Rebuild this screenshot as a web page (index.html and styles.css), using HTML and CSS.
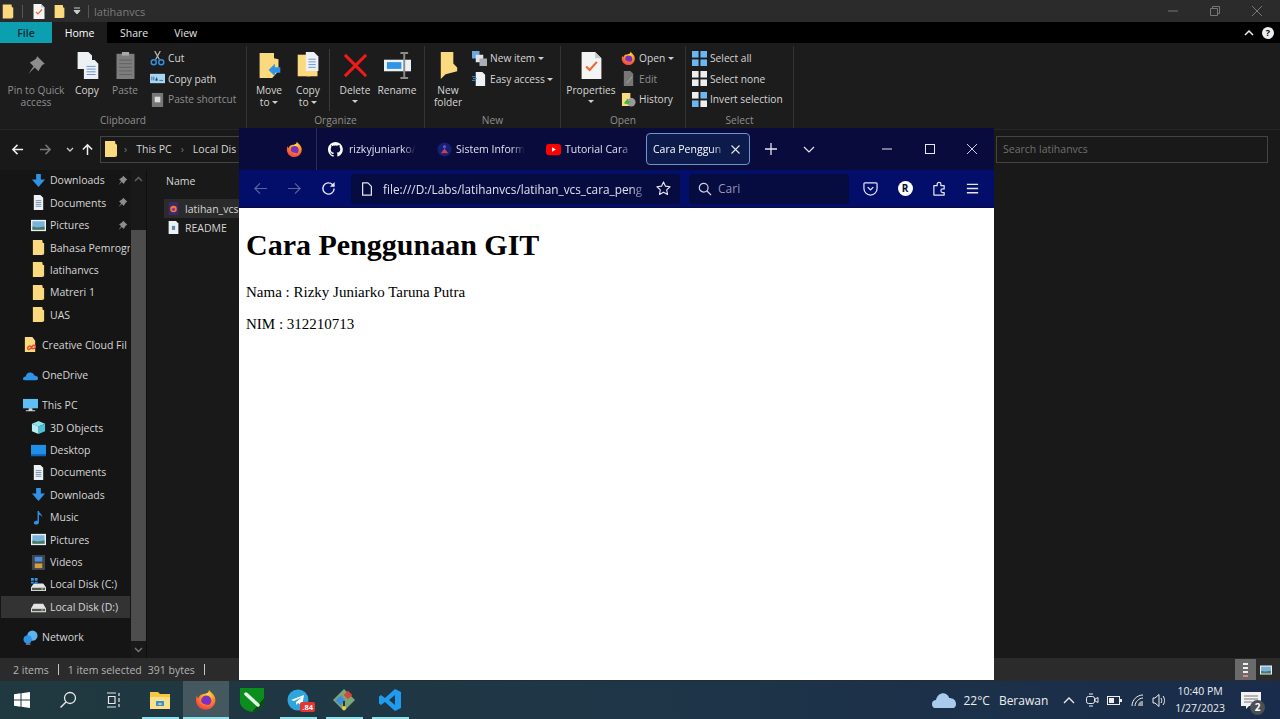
FILE: index.html
```html
<!DOCTYPE html>
<html lang="en">
<head>
  <meta charset="UTF-8" />
  <title>latihanvcs</title>
  <link rel="stylesheet" href="styles.css">
</head>
<body>
  <svg class="defs" width="0" height="0">
    <defs>
      <radialGradient id="fxOuter" cx="0.6" cy="0.25" r="0.9">
        <stop offset="0" stop-color="#ffe23f"/>
        <stop offset="0.45" stop-color="#ff8a1f"/>
        <stop offset="1" stop-color="#f0274f"/>
      </radialGradient>
      <symbol id="firefox" viewBox="0 0 16 16">
        <path fill="url(#fxOuter)" d="M10 .5c1 1.500 3.500 2.800 4.500 5.500 1 3-.3 6.300-3 8-3 1.800-7 1.200-9.200-1.400C.5 10.400.3 7 1.500 4.800c0 1 .4 1.500 1 1.900C3 5 4 4 5.500 3.800 7.800 3.400 10.500 3 10 .5z"/>
        <circle cx="8.200" cy="8.400" r="3.700" fill="#7b2fc4"/>
        <path fill="#ff8a1f" d="M4 9c1 3 4.500 4.200 7.500 2.300-2 .6-5 .3-7.500-2.300z"/>
      </symbol>
      <symbol id="folder" viewBox="0 0 16 16">
        <path fill="#fbd97f" d="M2 0h10l.5 3 1.500.5V15l-2 1H2z"/>
        <path fill="#e3b95a" d="M12 16l2-1-2-1z"/>
      </symbol>
      <symbol id="arrowDown" viewBox="0 0 16 16">
        <path fill="#2f93e6" d="M5.500 1h5v6H15l-7 8-7-8h4.500z"/>
      </symbol>
      <symbol id="doc" viewBox="0 0 16 16">
        <path fill="#eef1f4" d="M3 0h7l3 3v13H3z"/>
        <path stroke="#6f8faf" d="M5 6h6M5 8h6M5 10h6M5 12h6"/>
      </symbol>
      <symbol id="picture" viewBox="0 0 16 16">
        <rect y="2" width="16" height="12" fill="#eef1f4"/>
        <rect x="1.500" y="3.500" width="13" height="9" fill="#78b3dd"/>
        <path fill="#4d7a5e" d="M1.500 12.500V9l5 1 8-1v3.500z"/>
      </symbol>
      <symbol id="pin" viewBox="0 0 16 16">
        <path fill="#8c8c8c" d="M9 1l6 6-2 1-2 3-1 2-3-3-5 5 4-6-3-3 2-1 3-2z"/>
      </symbol>
      <symbol id="drive" viewBox="0 0 16 16">
        <path fill="#e4e4e4" d="M3 5h10l3 5v4H0v-4z"/>
        <rect x="1" y="10.500" width="14" height="2.500" fill="#555"/>
        <rect x="11" y="11" width="2" height="1.500" fill="#67d067"/>
      </symbol>
      <symbol id="bigDoc" viewBox="0 0 24 30">
        <path fill="#f4f4f4" d="M1 0h15l7 7v23H1z"/>
        <path fill="#c9c9c9" d="M16 0l7 7h-7z"/>
        <path fill="none" stroke="#ec6a35" stroke-width="2.400" d="M6 16l4 4 8-9"/>
      </symbol>
      <symbol id="sel" viewBox="0 0 16 16">
        <rect width="7" height="7"/><rect x="9" width="7" height="7"/>
        <rect y="9" width="7" height="7"/><rect x="9" y="9" width="7" height="7"/>
      </symbol>
    </defs>
  </svg>

  <div class="explorer">
    <div class="title-bar">
      <svg class="ic-title"><use href="#folder"/></svg>
      <span class="title-sep"></span>
      <svg class="ic-title qa-doc"><use href="#bigDoc"/></svg>
      <svg class="ic-title qa-folder"><use href="#folder"/></svg>
      <svg class="qa-drop" width="8" height="8" viewBox="0 0 8 8"><path d="M1 1h6M1 3.500h6l-3 3.500z" stroke="#ccc" fill="#ccc"/></svg>
      <span class="title-sep"></span>
      <span class="title-text">latihanvcs</span>
      <div class="win-controls">
        <svg width="10" height="10" viewBox="0 0 10 10"><path d="M0 5h10" stroke="#777"/></svg>
        <svg width="10" height="10" viewBox="0 0 10 10"><path d="M.5 2.500h7v7h-7zM2.500 2.500v-2h7v7h-2" stroke="#777" fill="none"/></svg>
        <svg width="10" height="10" viewBox="0 0 10 10"><path d="M0 0l10 10M10 0L0 10" stroke="#777"/></svg>
      </div>
    </div>

    <div class="tabs">
      <div class="tab tab-file">File</div>
      <div class="tab tab-home">Home</div>
      <div class="tab">Share</div>
      <div class="tab">View</div>
      <div class="tabs-right">
        <svg width="10" height="7" viewBox="0 0 10 7"><path d="M1 6l4-4 4 4" fill="none" stroke="#eee" stroke-width="1.500"/></svg>
        <span class="help">?</span>
      </div>
    </div>

    <div class="ribbon">
      <div class="group group-clipboard">
        <div class="group-body">
          <div class="big dim">
            <svg class="big-ic-pin" viewBox="0 0 16 16"><use href="#pin"/></svg>
            <span>Pin to Quick access</span>
          </div>
          <div class="big">
            <svg class="big-ic" viewBox="0 0 24 30">
              <path fill="#eef1f4" d="M1 0h12l4 4v15H1z"/>
              <path fill="#eef1f4" d="M8 9h12l4 4v17H8z"/>
              <path stroke="#5c8fd6" d="M11 16h10M11 19h10M11 22h10M11 25h10"/>
            </svg>
            <span>Copy</span>
          </div>
          <div class="big dim">
            <svg class="big-ic" viewBox="0 0 24 30">
              <rect x="2" y="2" width="20" height="28" fill="#7d7d7d"/>
              <rect x="8" y="0" width="8" height="4" fill="#a8a8a8"/>
              <path stroke="#5e5e5e" d="M5 9h14M5 13h14M5 17h14M5 21h14M5 25h14"/>
            </svg>
            <span>Paste</span>
          </div>
          <div class="small-col">
            <div class="small">
              <svg class="ic" viewBox="0 0 16 16"><path d="M5 0l5 9M11 0L6 9" stroke="#bbb" stroke-width="1.300"/><circle cx="4" cy="12" r="2.700" fill="none" stroke="#2f93e6" stroke-width="1.500"/><circle cx="12" cy="12" r="2.700" fill="none" stroke="#2f93e6" stroke-width="1.500"/></svg>
              <span>Cut</span>
            </div>
            <div class="small">
              <svg class="ic" viewBox="0 0 16 16"><rect y="3" width="16" height="10" fill="#a9d4f2"/><path d="M2 6v4M4 6v4M6 10l1-3 1 3M10 10h4" stroke="#3a6f9a"/></svg>
              <span>Copy path</span>
            </div>
            <div class="small dim">
              <svg class="ic" viewBox="0 0 16 16"><rect x="2" y="1" width="12" height="15" fill="#777"/><rect x="5" y="5" width="6" height="6" fill="#ddd"/></svg>
              <span>Paste shortcut</span>
            </div>
          </div>
        </div>
        <div class="group-label">Clipboard</div>
      </div>

      <div class="group group-organize">
        <div class="group-body">
          <div class="big">
            <svg class="big-ic" viewBox="0 0 24 30">
              <path fill="#fbd97f" d="M1 1h16v6l5 1v13l-7 8H1z"/>
              <path fill="#2f93e6" d="M11 20l7-7v4h6v6h-6v4z"/>
            </svg>
            <span>Move<br>to <i class="caret"></i></span>
          </div>
          <div class="big">
            <svg class="big-ic" viewBox="0 0 24 30">
              <path fill="#fbd97f" d="M0 3h14v24H0z"/>
              <path fill="#fbd97f" d="M10 8h12v19H10z"/>
              <path fill="#eef1f4" d="M9 0h9l5 5v16H9z"/>
              <path stroke="#5c8fd6" d="M12 8h8M12 11h8M12 14h8M12 17h8"/>
            </svg>
            <span>Copy<br>to <i class="caret"></i></span>
          </div>
          <span class="group-sep"></span>
          <div class="big">
            <svg class="big-ic" viewBox="-2 -2 28 28"><path d="M1 1l22 22M23 1L1 23" stroke="#f01a1a" stroke-width="3"/></svg>
            <span>Delete <i class="caret caret-block"></i></span>
          </div>
          <div class="big">
            <svg class="big-ic" viewBox="0 0 28 26">
              <rect x="0" y="7" width="28" height="12" fill="#eef1f4"/>
              <rect x="3" y="9.500" width="15" height="7" fill="#2f93e6"/>
              <path d="M17 0h8M21 0v26M17 26h8" stroke="#8c8c8c" stroke-width="2"/>
            </svg>
            <span>Rename</span>
          </div>
        </div>
        <div class="group-label">Organize</div>
      </div>

      <div class="group group-new">
        <div class="group-body">
          <div class="big">
            <svg class="big-ic" viewBox="0 0 20 28"><path fill="#fbd97f" d="M2 0h13v12l4 4v4l-12 3-5 5z"/></svg>
            <span>New<br>folder</span>
          </div>
          <div class="small-col">
            <div class="small">
              <svg class="ic" viewBox="0 0 16 16"><rect width="8" height="8" fill="#6da7dd"/><rect x="4" y="4" width="8" height="8" fill="#dfe3e8"/><rect x="8" y="8" width="8" height="8" fill="#a7adb5"/></svg>
              <span>New item <i class="caret"></i></span>
            </div>
            <div class="small">
              <svg class="ic" viewBox="0 0 16 16"><path fill="#eef1f4" d="M4 1h7l3 3v12H4z"/><path stroke="#2f93e6" d="M0 6h4M1 8h4M0 10h4"/></svg>
              <span>Easy access <i class="caret"></i></span>
            </div>
          </div>
        </div>
        <div class="group-label">New</div>
      </div>

      <div class="group group-open">
        <div class="group-body">
          <div class="big">
            <svg class="big-ic" viewBox="0 0 24 30"><use href="#bigDoc"/></svg>
            <span>Properties <i class="caret caret-block"></i></span>
          </div>
          <div class="small-col">
            <div class="small">
              <svg class="ic"><use href="#firefox"/></svg>
              <span>Open <i class="caret"></i></span>
            </div>
            <div class="small dim">
              <svg class="ic" viewBox="0 0 16 16"><path fill="#777" d="M3 0h7l3 3v13H3z"/><path stroke="#aaa" d="M6 13l6-7"/></svg>
              <span>Edit</span>
            </div>
            <div class="small">
              <svg class="ic" viewBox="0 0 16 16"><path fill="#fbd97f" d="M1 1h9v5l3 1v8H1z"/><circle cx="11" cy="11" r="4.500" fill="#9a9a9a"/><path fill="#39b54a" d="M3 12l4-5 1 3 3 0-4 3z"/></svg>
              <span>History</span>
            </div>
          </div>
        </div>
        <div class="group-label">Open</div>
      </div>

      <div class="group group-select">
        <div class="group-body">
          <div class="small-col">
            <div class="small">
              <svg class="ic sel-all"><use href="#sel"/></svg>
              <span>Select all</span>
            </div>
            <div class="small">
              <svg class="ic sel-none"><use href="#sel"/></svg>
              <span>Select none</span>
            </div>
            <div class="small">
              <svg class="ic" viewBox="0 0 16 16">
                <rect width="7" height="7" fill="#eee"/><rect x="9" width="7" height="7" fill="#6cb6f2"/>
                <rect y="9" width="7" height="7" fill="#6cb6f2"/><rect x="9" y="9" width="7" height="7" fill="#eee"/>
              </svg>
              <span>Invert selection</span>
            </div>
          </div>
        </div>
        <div class="group-label">Select</div>
      </div>
    </div>

    <div class="address-row">
      <svg class="nav-arrow" viewBox="0 0 14 14"><path d="M13 7H2M7 2L2 7l5 5" fill="none" stroke="#eee" stroke-width="1.600"/></svg>
      <svg class="nav-arrow" viewBox="0 0 14 14"><path d="M1 7h11M7 2l5 5-5 5" fill="none" stroke="#777" stroke-width="1.600"/></svg>
      <svg class="nav-drop" viewBox="0 0 8 5"><path d="M1 1l3 3 3-3" fill="none" stroke="#ccc" stroke-width="1.300"/></svg>
      <svg class="nav-arrow" viewBox="0 0 14 14"><path d="M7 13V2M2 7l5-5 5 5" fill="none" stroke="#eee" stroke-width="1.600"/></svg>
      <div class="address-box">
        <svg class="ic crumb-icon"><use href="#folder"/></svg>
        <span class="crumb-sep">›</span>
        <span>This PC</span>
        <span class="crumb-sep">›</span>
        <span>Local Dis</span>
      </div>
      <div class="search-box">Search latihanvcs</div>
    </div>

    <div class="main">
      <div class="side">
        <div class="nav-list">
          <div class="nav-group">
            <div class="nav-row sub"><svg class="ic"><use href="#arrowDown"/></svg><span>Downloads</span><svg class="ic-pin"><use href="#pin"/></svg></div>
            <div class="nav-row sub"><svg class="ic"><use href="#doc"/></svg><span>Documents</span><svg class="ic-pin"><use href="#pin"/></svg></div>
            <div class="nav-row sub"><svg class="ic"><use href="#picture"/></svg><span>Pictures</span><svg class="ic-pin"><use href="#pin"/></svg></div>
            <div class="nav-row sub"><svg class="ic"><use href="#folder"/></svg><span>Bahasa Pemrogr</span></div>
            <div class="nav-row sub"><svg class="ic"><use href="#folder"/></svg><span>latihanvcs</span></div>
            <div class="nav-row sub"><svg class="ic"><use href="#folder"/></svg><span>Matreri 1</span></div>
            <div class="nav-row sub"><svg class="ic"><use href="#folder"/></svg><span>UAS</span></div>
          </div>
          <div class="nav-group">
            <div class="nav-row top">
              <svg class="ic" viewBox="0 0 16 16"><path fill="#fbd97f" d="M2 0h8l3 4v12H2z"/><path d="M5 12c0-3 4-3 4-1s3 2 4 0-2-3-3-1-5 5-5 2z" fill="none" stroke="#e8472e" stroke-width="1.500"/></svg>
              <span>Creative Cloud Fil</span>
            </div>
          </div>
          <div class="nav-group">
            <div class="nav-row top">
              <svg class="ic" viewBox="0 0 16 16"><path fill="#2f93e6" d="M0 12c0-2 1-3 3-3 0-3 3-5 6-4 2 .5 3 2 3 3 2 0 4 1 4 3s-1 2-2 2H2c-1 0-2-.5-2-1z"/></svg>
              <span>OneDrive</span>
            </div>
          </div>
          <div class="nav-group">
            <div class="nav-row top">
              <svg class="ic" viewBox="0 0 16 16"><rect y="1" width="16" height="10" fill="#5fc0f5"/><path d="M6 11h4v2h3v1H3v-1h3z" fill="#cfd6dc"/></svg>
              <span>This PC</span>
            </div>
            <div class="nav-row sub">
              <svg class="ic" viewBox="0 0 16 16"><path fill="#8fe3ee" d="M1 4l7-3 7 3-7 3z"/><path fill="#4cc0d8" d="M8 7l7-3v8l-7 3z"/><path fill="#b7eef4" d="M1 4l7 3v8l-7-3z"/></svg>
              <span>3D Objects</span>
            </div>
            <div class="nav-row sub">
              <svg class="ic" viewBox="0 0 16 16"><rect y="2" width="16" height="12" fill="#1f8fe8"/><rect x="0" y="12" width="16" height="2" fill="#0d63b0"/></svg>
              <span>Desktop</span>
            </div>
            <div class="nav-row sub"><svg class="ic"><use href="#doc"/></svg><span>Documents</span></div>
            <div class="nav-row sub"><svg class="ic"><use href="#arrowDown"/></svg><span>Downloads</span></div>
            <div class="nav-row sub">
              <svg class="ic" viewBox="0 0 16 16"><path fill="#2f93e6" d="M7 1h1.500c.5 3 4 3.500 3.500 7-.5-2-2-3-3.500-3v8c0 1.500-1.500 2.500-3 2.500S3 14.500 3 13.500 4.500 11 7 11.500z"/></svg>
              <span>Music</span>
            </div>
            <div class="nav-row sub"><svg class="ic"><use href="#picture"/></svg><span>Pictures</span></div>
            <div class="nav-row sub">
              <svg class="ic" viewBox="0 0 16 16"><rect x="1" width="14" height="16" fill="#3d4450"/><rect x="4" y="2" width="8" height="5" fill="#4a8fd8"/><rect x="4" y="9" width="8" height="5" fill="#d89a3a"/></svg>
              <span>Videos</span>
            </div>
            <div class="nav-row sub">
              <svg class="ic" viewBox="0 0 16 16"><path fill="#e4e4e4" d="M3 7h10l3 4v4H0v-4z"/><rect x="1" y="11.500" width="14" height="2.500" fill="#555"/><rect x="11" y="12" width="2" height="1.500" fill="#67d067"/><path fill="#2f93e6" d="M0 1h3v3H0zM4 1h3v3H4zM0 5h3v2H0zM4 5h3v2H4z"/></svg>
              <span>Local Disk (C:)</span>
            </div>
            <div class="nav-row sub selected"><svg class="ic"><use href="#drive"/></svg><span>Local Disk (D:)</span></div>
          </div>
          <div class="nav-group">
            <div class="nav-row top">
              <svg class="ic" viewBox="0 0 16 16"><circle cx="10" cy="6" r="5.500" fill="#5fb2ec"/><circle cx="5" cy="10" r="4.500" fill="#2f93e6"/><path d="M3 15h5" stroke="#bbb"/></svg>
              <span>Network</span>
            </div>
          </div>
        </div>
        <div class="scrollbar">
          <div class="scroll-arrow"><svg width="9" height="6" viewBox="0 0 9 6"><path d="M1 5l3.500-3.500L8 5" fill="none" stroke="#666" stroke-width="1.400"/></svg></div>
          <div class="scroll-gap"></div>
          <div class="scroll-thumb"></div>
          <div class="scroll-arrow"><svg width="9" height="6" viewBox="0 0 9 6"><path d="M1 1l3.500 3.500L8 1" fill="none" stroke="#777" stroke-width="1.400"/></svg></div>
        </div>
      </div>
      <div class="files">
        <div class="files-head">Name</div>
        <div class="file-row active">
          <svg class="ic" viewBox="0 0 16 16"><rect x="2" width="12" height="16" fill="#3b2a6a"/><circle cx="8" cy="8.500" r="4" fill="#ff7a1f"/><circle cx="8" cy="9" r="2" fill="#7b2fc4"/></svg>
          <span>latihan_vcs</span>
        </div>
        <div class="file-row">
          <svg class="ic" viewBox="0 0 16 16"><path fill="#eef1f4" d="M2 0h9l3 3v13H2z"/><rect x="6" y="6" width="4" height="5" fill="#5d8fa8"/></svg>
          <span>README</span>
        </div>
      </div>
    </div>

    <div class="status-bar">
      <span>2 items</span>
      <span class="status-sep"></span>
      <span>1 item selected</span>
      <span class="status-size">391 bytes</span>
      <span class="status-sep"></span>
      <div class="view-toggle">
        <span class="view-btn on">
          <svg width="6" height="16" viewBox="0 0 6 16"><path d="M0 1h5v2H0z" fill="#eee"/><path d="M0 5h5v2H0zM0 9h5v2H0z" fill="#eee"/><path d="M0 13h5v2H0z" fill="#d88"/></svg>
        </span>
        <span class="view-btn view-btn-wide">
          <svg width="14" height="12" viewBox="0 0 14 12"><use href="#picture"/></svg>
        </span>
      </div>
    </div>
  </div>

  <div class="taskbar">
    <div class="task-left">
      <span class="task-btn">
        <svg width="16" height="16" viewBox="0 0 16 16"><path fill="#fff" d="M0 2.300l6.500-1V7.500H0zM7.500 1.200L16 0v7.500H7.500zM0 8.500h6.500v6.200L0 13.700zM7.500 8.500H16V16l-8.500-1.200z"/></svg>
      </span>
      <span class="task-btn">
        <svg width="18" height="18" viewBox="0 0 18 18"><circle cx="11" cy="7" r="5.500" fill="none" stroke="#e8e8e8" stroke-width="1.300"/><path d="M7 11l-5.500 5.500" stroke="#e8e8e8" stroke-width="1.500"/></svg>
      </span>
      <span class="task-btn">
        <svg width="16" height="16" viewBox="0 0 16 16"><path d="M1 1h9M1 15h9M2.500 4.500h6.500v7H2.500zM13 1v3M13 6v4M13 12v3" fill="none" stroke="#e8e8e8" stroke-width="1.200"/></svg>
      </span>
      <span class="task-btn app running">
        <svg width="22" height="19" viewBox="0 0 22 19"><path fill="#f5c93f" d="M1 1h8l2 2h10v15H1z"/><path fill="#fbe08a" d="M1 6h20v12H1z"/><path fill="#2f93e6" d="M7 10h8v5H7z"/><rect x="9.500" y="12" width="3" height="2" fill="#f5c93f"/></svg>
      </span>
      <span class="task-btn app running active">
        <svg width="22" height="22"><use href="#firefox"/></svg>
      </span>
      <span class="task-btn app">
        <svg width="24" height="24" viewBox="0 0 24 24"><path fill="#0a8f1c" d="M0 0h24v14c0 5-6 9-12 10C6 23 0 19 0 14z"/><path fill="#034d10" d="M24 10v4c0 5-6 9-12 10z"/><path d="M6 6l12 11" stroke="#eaf5ea" stroke-width="3.500" stroke-linecap="round"/></svg>
      </span>
      <span class="task-btn app running badge-wrap">
        <svg width="22" height="22" viewBox="0 0 22 22"><circle cx="11" cy="11" r="10.500" fill="#2ea6dd"/><path fill="#fff" d="M4 11l13-5-2 11-4-3-2 2v-3l6-5-8 4z"/></svg>
        <span class="badge">.84</span>
      </span>
      <span class="task-btn app running">
        <svg width="22" height="22" viewBox="0 0 22 22"><path fill="#7aa874" d="M11 0l11 11-11 11L0 11z"/><rect x="4" y="8" width="7" height="7" fill="#3f8fe0" transform="rotate(45 7.500 11.500)"/><rect x="12" y="3" width="6" height="6" fill="#d8453d" transform="rotate(45 15 6)"/><path d="M11 12v8" stroke="#333" stroke-width="2"/><circle cx="11" cy="19" r="2" fill="#f5c93f"/></svg>
      </span>
      <span class="task-btn app running">
        <svg width="22" height="22" viewBox="0 0 22 22"><path fill="#1f9cf0" d="M16 0l6 3v16l-6 3L6 13l-4 3-2-1.500V7.500L2 6l4 3zM16 6l-6 5 6 5z"/></svg>
      </span>
    </div>
    <div class="tray">
      <svg class="tray-cloud" width="24" height="16" viewBox="0 0 24 16"><path fill="#a9cbee" d="M0 12c0-3 2-4 4-4 1-5 6-8 10-6 2 1 3 3 3 4 4 0 7 2 7 6 0 2-1 4-3 4H3c-2 0-3-2-3-4z"/></svg>
      <span class="weather">22°C</span>
      <span class="weather">Berawan</span>
      <svg class="tray-ic first" width="12" height="8" viewBox="0 0 12 8"><path d="M1 7l5-5 5 5" fill="none" stroke="#eee" stroke-width="1.300"/></svg>
      <svg class="tray-ic" width="14" height="16" viewBox="0 0 14 16"><rect x="1.500" y="4.500" width="8" height="7" rx="2" fill="none" stroke="#eee"/><path d="M10 7l3-1.500v5L10 9zM4 2h4M4 14h4" fill="none" stroke="#eee"/></svg>
      <svg class="tray-ic tight" width="15" height="9" viewBox="0 0 15 9"><rect x=".5" y=".5" width="12" height="8" fill="none" stroke="#eee"/><rect x="2" y="2" width="5" height="5" fill="#eee"/><rect x="13" y="3" width="2" height="3" fill="#eee"/></svg>
      <svg class="tray-ic tight" width="14" height="14" viewBox="0 0 14 14"><path d="M2 13c0-6 5-11 11-11M5 13c0-4 4-8 8-8" fill="none" stroke="#eee"/><path d="M8 13c0-3 2-5 5-5v5z" fill="#999"/></svg>
      <svg class="tray-ic tight" width="15" height="15" viewBox="0 0 15 15"><path d="M1 5h2l4-3.500v12L3 10H1z" fill="none" stroke="#eee"/><path d="M9 5c1 1.500 1 3.500 0 5M11 3c2 2.500 2 6.500 0 9" fill="none" stroke="#eee"/></svg>
      <div class="clock"><span>10:40 PM</span><span>1/27/2023</span></div>
      <span class="notif">
        <svg width="20" height="17" viewBox="0 0 20 17"><path fill="#f2f2f2" d="M0 0h20v14H8l-3 3v-3H0z"/><path d="M3 4h14M3 7h14M3 10h8" stroke="#777"/></svg>
        <span class="notif-count">2</span>
      </span>
    </div>
  </div>

  <div class="browser">
    <div class="fx-titlebar">
      <svg class="fx-logo"><use href="#firefox"/></svg>
      <span class="fx-divider"></span>
      <div class="fx-tab tab-github">
        <svg class="ic-tab" viewBox="0 0 16 16"><path fill="#fff" d="M8 0a8 8 0 0 0-2.500 15.600c.4.100.5-.2.500-.4v-1.400c-2.200.5-2.700-1-2.700-1-.4-.9-.9-1.200-.9-1.200-.7-.5.100-.5.100-.5.800.1 1.200.8 1.200.8.700 1.200 1.900.9 2.300.7.100-.5.300-.9.500-1.100-1.800-.2-3.600-.9-3.600-4 0-.9.300-1.600.8-2.100-.1-.2-.4-1 .1-2.100 0 0 .7-.2 2.200.8a7.500 7.500 0 0 1 4 0c1.500-1 2.200-.8 2.200-.8.400 1.100.2 1.900.1 2.100.5.600.8 1.300.8 2.100 0 3.100-1.900 3.700-3.700 3.900.3.300.6.700.6 1.500v2.200c0 .2.100.5.600.4A8 8 0 0 0 8 0z"/></svg>
        <span class="fx-tab-text tab-w1">rizkyjuniarko/</span>
      </div>
      <div class="fx-tab">
        <svg class="ic-tab" viewBox="0 0 16 16"><circle cx="8" cy="8" r="7.500" fill="#16206f"/><circle cx="8" cy="5" r="1.800" fill="#5a4fd0"/><path fill="#c04060" d="M4 12l4-5 4 5z"/></svg>
        <span class="fx-tab-text tab-w2">Sistem Inform</span>
      </div>
      <div class="fx-tab">
        <svg class="ic-tab" viewBox="0 0 16 12"><rect width="16" height="12" rx="3" fill="#f00"/><path fill="#fff" d="M6.500 3.500l4 2.500-4 2.500z"/></svg>
        <span class="fx-tab-text tab-w3">Tutorial Cara</span>
      </div>
      <div class="fx-tab current">
        <span class="fx-tab-text tab-w4">Cara Penggun</span>
        <svg class="tab-close" width="9" height="9" viewBox="0 0 9 9"><path d="M.5.5l8 8M8.500.5l-8 8" stroke="#e6e6f0" stroke-width="1.100"/></svg>
      </div>
      <svg class="fx-plus" width="12" height="12" viewBox="0 0 12 12"><path d="M6 0v12M0 6h12" stroke="#e6e6f0" stroke-width="1.300"/></svg>
      <svg class="fx-list" width="12" height="7" viewBox="0 0 12 7"><path d="M1 1l5 5 5-5" fill="none" stroke="#e6e6f0" stroke-width="1.200"/></svg>
      <div class="fx-controls">
        <svg width="10" height="10" viewBox="0 0 10 10"><path d="M0 5h10" stroke="#e6e6f0"/></svg>
        <svg width="10" height="10" viewBox="0 0 10 10"><rect x=".5" y=".5" width="9" height="9" fill="none" stroke="#e6e6f0"/></svg>
        <svg width="10" height="10" viewBox="0 0 10 10"><path d="M0 0l10 10M10 0L0 10" stroke="#e6e6f0" stroke-width=".9"/></svg>
      </div>
    </div>
    <div class="fx-toolbar">
      <svg class="fx-btn" viewBox="0 0 16 16"><path d="M15 8H2M7.500 2.500L2 8l5.500 5.500" fill="none" stroke="#5a6496" stroke-width="1.300"/></svg>
      <svg class="fx-btn" viewBox="0 0 16 16"><path d="M1 8h13M8.500 2.500L14 8l-5.500 5.500" fill="none" stroke="#5a6496" stroke-width="1.300"/></svg>
      <svg class="fx-btn" viewBox="0 0 16 16"><path d="M14 8a6 6 0 1 1-1.800-4.300L14 5.500" fill="none" stroke="#e6e6f0" stroke-width="1.500"/><path d="M14.500 1v5h-5z" fill="#e6e6f0"/></svg>
      <div class="fx-url">
        <svg class="fx-page" viewBox="0 0 14 16"><path d="M2 1h6l4 4v10H2z" fill="none" stroke="#e6e6f0" stroke-width="1.400" stroke-linejoin="round"/></svg>
        <span class="fx-url-text">file:///D:/Labs/latihanvcs/latihan_vcs_cara_peng</span>
        <svg class="fx-star" viewBox="0 0 16 16"><path d="M8 1l2.100 4.500 4.900.6-3.600 3.400.9 4.900L8 11.900l-4.300 2.500.9-4.900L1 6.100l4.900-.6z" fill="none" stroke="#e6e6f0" stroke-width="1.200" stroke-linejoin="round"/></svg>
      </div>
      <div class="fx-search">
        <svg class="fx-page" viewBox="0 0 16 16"><circle cx="6.500" cy="6.500" r="5" fill="none" stroke="#cfd2e6" stroke-width="1.400"/><path d="M10 10l5 5" stroke="#cfd2e6" stroke-width="1.500"/></svg>
        <span>Cari</span>
      </div>
      <svg class="fx-btn pocket" viewBox="0 0 16 16"><path d="M2 2h12a1 1 0 0 1 1 1v5a7 7 0 0 1-14 0V3a1 1 0 0 1 1-1z" fill="none" stroke="#e6e6f0" stroke-width="1.300"/><path d="M5 6.500l3 3 3-3" fill="none" stroke="#e6e6f0" stroke-width="1.400"/></svg>
      <span class="fx-avatar">R</span>
      <svg class="fx-btn" viewBox="0 0 16 16"><path d="M2 15V5h3.500V3.500a2 2 0 0 1 4 0V5H13v3.500h-1.500a2 2 0 0 0 0 4H13V15z" fill="none" stroke="#e6e6f0" stroke-width="1.300" stroke-linejoin="round"/></svg>
      <svg class="fx-btn" viewBox="0 0 16 16"><path d="M2 3.500h12M2 8h12M2 12.500h12" stroke="#e6e6f0" stroke-width="1.400"/></svg>
    </div>
    <div class="fx-page-body">
      <h1>Cara Penggunaan GIT</h1>
      <p>Nama : Rizky Juniarko Taruna Putra</p>
      <p>NIM : 312210713</p>
    </div>
  </div>
</body>
</html>
```

FILE: styles.css
```css
html, body {
  margin: 0;
  padding: 0;
  height: 719px;
  overflow: hidden;
  background: #191919;
  font-family: 'Open Sans', 'Noto Sans', sans-serif;
  font-size: 10.5px;
  color: #d6d6d6;
}
body {
  display: flex;
  flex-direction: column;
}
.defs {
  position: absolute;
}
svg {
  display: block;
  flex-shrink: 0;
}
.ic {
  width: 16px;
  height: 16px;
}
.dim {
  color: #8f8f8f;
}

/* explorer window */
.explorer {
  flex: 1;
  display: flex;
  flex-direction: column;
  min-height: 0;
}
.title-bar {
  height: 22px;
  background: #2b2b2b;
  display: flex;
  align-items: center;
  padding-left: 1px;
}
.ic-title {
  width: 14px;
  height: 15px;
}
.title-sep {
  width: 1px;
  height: 13px;
  background: #555;
  margin: 0 7px;
}
.qa-doc {
  width: 12px;
  margin-left: 3px;
}
.qa-folder {
  width: 13px;
  margin-left: 8px;
}
.qa-drop {
  margin-left: 7px;
}
.title-text {
  margin-left: -2px;
  color: #7b7b7b;
  font-size: 11px;
}
.win-controls {
  margin-left: auto;
  display: flex;
  gap: 32px;
  padding-right: 18px;
}
.tabs {
  height: 21px;
  background: #000;
  display: flex;
  align-items: stretch;
}
.tab {
  color: #e4e4e4;
  display: flex;
  align-items: center;
  padding: 0 13px;
  font-size: 10.5px;
}
.tab-file {
  width: 52px;
  box-sizing: border-box;
  justify-content: center;
  background: #0c9fb0;
  color: #0b2b30;
  font-weight: 600;
  padding: 0;
}
.tab-home {
  width: 55px;
  box-sizing: border-box;
  justify-content: center;
  background: #1c1c1c;
  color: #fff;
  padding: 0;
}
.tabs-right {
  margin-left: auto;
  display: flex;
  align-items: center;
  gap: 8px;
  padding-right: 6px;
}
.help {
  width: 12px;
  height: 12px;
  border-radius: 50%;
  background: #eee;
  color: #000;
  font-size: 9px;
  font-weight: 700;
  text-align: center;
  line-height: 12px;
}

/* ribbon */
.ribbon {
  height: 87px;
  background: #1c1c1c;
  display: flex;
  border-bottom: 1px solid #262626;
  box-sizing: border-box;
  font-size: 10.2px;
}
.group {
  display: flex;
  flex-direction: column;
  margin: 3px 0 0;
  border-right: 1px solid #333;
  box-sizing: border-box;
}
.group-clipboard { width: 247px; }
.group-organize { width: 178px; }
.group-new { width: 136px; }
.group-open { width: 125px; }
.group-select { width: 108px; }
.group-body {
  height: 67px;
  display: grid;
  align-items: start;
}
.group-clipboard .group-body { grid-template-columns: 72px 30px 46px 1fr; }
.group-organize .group-body { grid-template-columns: 44px 34px 9px 42px 42px; }
.group-new .group-body { grid-template-columns: 46px 1fr; }
.group-open .group-body { grid-template-columns: 60px 1fr; }
.group-select .group-body { grid-template-columns: 1fr; }
.group-label {
  text-align: center;
  color: #8f8f8f;
  height: 14px;
  line-height: 14px;
}
.big {
  display: flex;
  flex-direction: column;
  align-items: center;
  text-align: center;
  line-height: 12px;
  padding-top: 6px;
}
.big-ic {
  width: 27px;
  height: 27px;
  margin-bottom: 5px;
}
.big-ic-pin {
  width: 20px;
  height: 20px;
  margin: 3px 0 9px;
}
.group-sep {
  width: 1px;
  height: 62px;
  background: #3a3a3a;
  justify-self: center;
  margin-top: 3px;
}
.caret {
  display: inline-block;
  width: 0;
  height: 0;
  border: 3px solid transparent;
  border-top-color: #cfcfcf;
  border-bottom-width: 0;
  vertical-align: 2px;
}
.caret-block {
  display: block;
  margin: 4px auto 0;
}
.small-col {
  display: flex;
  flex-direction: column;
  gap: 4.500px;
  padding: 4px 0 0 2px;
}
.group-new .small-col { padding-left: 1px; }
.group-open .small-col { padding-left: 0; }
.group-select .small-col { padding-left: 6px; }
.small {
  display: flex;
  align-items: center;
  gap: 3px;
  height: 16px;
  white-space: nowrap;
}
.small .ic {
  width: 15px;
  height: 15px;
}
.sel-all { fill: #6cb6f2; }
.sel-none { fill: #eee; }

/* address row */
.address-row {
  height: 40px;
  background: #191919;
  display: flex;
  align-items: center;
  padding: 0 12px 2px 11px;
  box-sizing: border-box;
}
.nav-arrow {
  width: 13px;
  height: 13px;
  margin-right: 15px;
}
.nav-drop {
  width: 8px;
  height: 5px;
  margin-right: 7px;
  margin-left: -1px;
}
.address-box {
  flex: 1;
  height: 27px;
  margin-left: -9px;
  border: 1px solid #444;
  box-sizing: border-box;
  display: flex;
  align-items: center;
  gap: 6px;
  padding-left: 2px;
  color: #d6d6d6;
}
.crumb-icon {
  margin-right: -4px;
}
.crumb-sep {
  color: #777;
  margin: 0 3px;
}
.search-box {
  width: 272px;
  height: 27px;
  margin-left: 6px;
  border: 1px solid #444;
  box-sizing: border-box;
  padding-left: 6px;
  line-height: 25px;
  color: #6f6f6f;
}

/* main */
.main {
  flex: 1;
  min-height: 0;
  display: flex;
}
.side {
  width: 147px;
  display: flex;
  background: #151515;
  border-right: 1px solid #0f0f0f;
  box-sizing: border-box;
}
.nav-list {
  width: 129px;
  margin: -0.8px 1px 0;
  overflow: hidden;
  flex-shrink: 0;
}
.nav-group {
  margin-bottom: 7.800px;
}
.nav-row {
  height: 22.400px;
  display: flex;
  align-items: center;
  gap: 4px;
  white-space: nowrap;
  font-size: 10.5px;
}
.nav-row.sub { padding-left: 30px; }
.nav-row.top { padding-left: 22px; }
.nav-row .ic {
  width: 15px;
  height: 15px;
}
.nav-row.selected {
  background: #333;
}
.ic-pin {
  width: 11px;
  height: 11px;
  margin-left: auto;
  margin-right: 2px;
}
.scrollbar {
  width: 15px;
  display: flex;
  flex-direction: column;
  background: #191919;
}
.scroll-arrow {
  height: 17px;
  display: flex;
  align-items: center;
  justify-content: center;
}
.scroll-gap {
  height: 43px;
}
.scroll-thumb {
  flex: 1;
  background: #4d4d4d;
}
.files {
  flex: 1;
  background: #191919;
  padding-left: 17px;
}
.files-head {
  height: 24px;
  line-height: 23px;
  padding-left: 2px;
  margin-bottom: 5px;
}
.file-row {
  height: 19px;
  display: flex;
  align-items: center;
  gap: 5px;
  padding-left: 3px;
  white-space: nowrap;
  width: 90px;
  overflow: hidden;
}
.file-row .ic {
  width: 13px;
  height: 15px;
}
.file-row.active {
  background: #2b2b2b;
}
.status-bar {
  height: 23px;
  background: #2b2b2b;
  display: flex;
  align-items: center;
  padding-left: 13px;
  color: #b4b4b4;
}
.status-sep {
  width: 1px;
  height: 11px;
  background: #c4c4c4;
  margin: 0 9px;
}
.status-size {
  margin-left: 6px;
}
.view-toggle {
  margin-left: auto;
  display: flex;
  margin-right: 4px;
}
.view-btn {
  width: 21px;
  height: 21px;
  display: flex;
  align-items: center;
  justify-content: center;
}
.view-btn-wide {
  width: 20px;
}
.view-btn.on {
  background: #6a6a6a;
}

/* taskbar */
.taskbar {
  height: 38px;
  flex-shrink: 0;
  background: linear-gradient(90deg, #20383f 0, #1f3647 45%, #192c4b 100%);
  display: flex;
  justify-content: space-between;
  color: #eee;
}
.task-left {
  display: flex;
  margin-left: -1px;
}
.task-btn {
  width: 46px;
  display: flex;
  align-items: center;
  justify-content: center;
  position: relative;
}
.task-btn.running::after {
  content: '';
  position: absolute;
  left: 5px;
  right: 4px;
  bottom: 0;
  height: 2px;
  background: #8fdfe8;
}
.task-btn.active {
  background: #46585f;
}
.task-btn.active::after {
  left: 0;
  right: 0;
}
.badge {
  position: absolute;
  right: 6px;
  bottom: 7px;
  background: #e5352f;
  color: #fff;
  font-size: 7.500px;
  font-weight: 700;
  line-height: 10px;
  padding: 0 2px;
  border-radius: 2px;
}
.tray {
  display: flex;
  align-items: center;
  padding-right: 19px;
}
.tray-cloud {
  margin-right: 7px;
}
.weather {
  font-size: 12px;
  margin-right: 9px;
}
.tray-ic {
  margin-left: 8px;
  margin-right: 2px;
}
.tray-ic.first {
  margin-left: 6px;
}
.tray-ic.tight {
  margin-left: 6px;
}
.clock {
  display: flex;
  flex-direction: column;
  align-items: center;
  font-size: 10.500px;
  line-height: 17px;
  margin: 0 16px 0 6px;
}
.notif {
  position: relative;
}
.notif-count {
  position: absolute;
  right: -4px;
  bottom: -6px;
  width: 15px;
  height: 15px;
  border-radius: 50%;
  background: #4a5054;
  color: #fff;
  font-size: 10px;
  font-weight: 700;
  text-align: center;
  line-height: 15px;
}

/* browser window, floats over the explorer */
.browser {
  position: absolute;
  left: 239px;
  top: 128px;
  width: 755px;
  height: 552px;
  display: flex;
  flex-direction: column;
  background: #fff;
}
.fx-titlebar {
  height: 42px;
  background: #080b3c;
  display: flex;
  align-items: center;
  color: #dfe0ee;
  font-size: 10.5px;
}
.fx-logo {
  width: 17px;
  height: 17px;
  margin-left: 47px;
}
.fx-divider {
  width: 1px;
  height: 42px;
  background: #2a2d5a;
  margin-left: 13px;
}
.fx-tab {
  display: flex;
  align-items: center;
  gap: 4px;
  margin-left: 10px;
}
.tab-github {
  gap: 6px;
  margin-left: 11px;
}
.ic-tab {
  width: 15px;
  height: 15px;
}
.fx-tab-text {
  overflow: hidden;
  white-space: nowrap;
  -webkit-mask-image: linear-gradient(90deg, #000 80%, transparent);
  mask-image: linear-gradient(90deg, #000 80%, transparent);
}
.tab-w1 { width: 67px; margin-right: 11px; }
.tab-w2 { width: 69px; margin-right: 11px; }
.tab-w3 { width: 68px; margin-right: 7px; }
.tab-w4 { width: 74px; }
.fx-tab.current {
  width: 104px;
  height: 32px;
  margin-left: 6px;
  box-sizing: border-box;
  border: 1px solid #6f93cf;
  border-radius: 4px;
  background: #0c1a4c;
  padding-left: 6px;
  color: #fff;
  gap: 4px;
}
.fx-plus {
  margin-left: 15px;
}
.fx-list {
  margin-left: 26px;
}
.fx-controls {
  margin-left: 67px;
  display: flex;
  gap: 32.500px;
}
.fx-toolbar {
  height: 38px;
  background: #030e6b;
  display: flex;
  align-items: center;
  color: #dfe0ee;
  border-bottom: 1px solid #0a0a40;
  box-sizing: border-box;
}
.fx-btn {
  width: 15px;
  height: 15px;
  margin-left: 18px;
}
.fx-btn:first-child {
  margin-left: 14px;
}
.fx-btn:nth-child(2), .fx-btn:nth-child(3) {
  margin-left: 19px;
}
.fx-url {
  width: 329px;
  height: 30px;
  margin-left: 15px;
  background: #060b40;
  border-radius: 4px;
  display: flex;
  align-items: center;
  padding-left: 9px;
  box-sizing: border-box;
}
.fx-page {
  width: 14px;
  height: 14px;
}
.fx-url-text {
  width: 266px;
  margin-left: 9px;
  font-size: 11.800px;
  overflow: hidden;
  white-space: nowrap;
  -webkit-mask-image: linear-gradient(90deg, #000 93%, transparent);
  mask-image: linear-gradient(90deg, #000 93%, transparent);
}
.fx-star {
  width: 15px;
  height: 15px;
  margin-left: 7px;
}
.fx-search {
  width: 160px;
  height: 30px;
  margin-left: 9px;
  background: #060b40;
  border-radius: 4px;
  display: flex;
  align-items: center;
  gap: 6px;
  padding-left: 9px;
  box-sizing: border-box;
  font-size: 12px;
  color: #9698b8;
}
.fx-btn.pocket {
  margin-left: 14px;
}
.fx-avatar {
  width: 15px;
  height: 15px;
  margin-left: 19.500px;
  margin-right: 1px;
  border-radius: 50%;
  background: #fff;
  color: #080b3c;
  font-size: 10px;
  font-weight: 700;
  text-align: center;
  line-height: 15px;
}
.fx-page-body {
  flex: 1;
  padding: 8px 8px 8px 7px;
  color: #000;
  font-family: 'Liberation Serif', serif;
  font-size: 15px;
}
.fx-page-body h1 {
  font-size: 30px;
  margin: 12px 0 22px;
  line-height: 34px;
}
.fx-page-body p {
  margin: 0 0 15px;
  line-height: 17px;
}
```
